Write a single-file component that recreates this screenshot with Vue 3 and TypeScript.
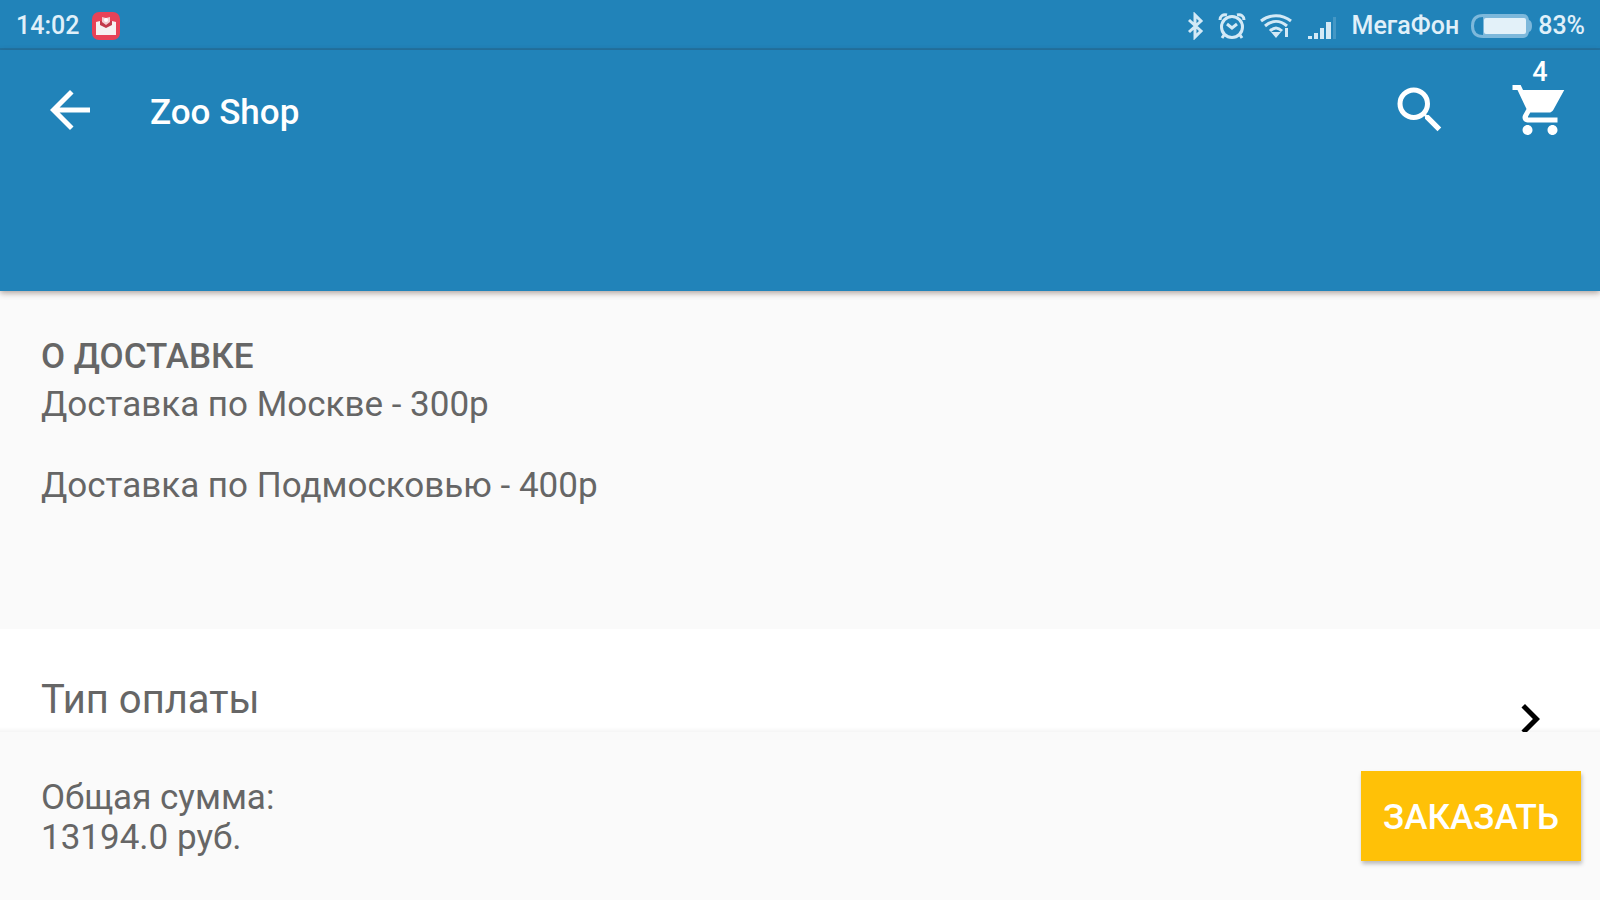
<script setup lang="ts">
import { ref } from 'vue'

const cartCount = ref(4)
const deliveryOptions: string[] = ['Доставка по Москве - 300р', 'Доставка по Подмосковью - 400р']
const total = ref(13194)
const battery = ref(83)
</script>

<template>
  <div class="screen">
    <div class="status">
      <span>14:02</span>
      <svg class="mail" viewBox="0 0 28 28" aria-hidden="true">
        <rect width="28" height="28" rx="7" fill="#e84257" />
        <path d="M4 10l4-1 6 5 6-5 4 1v13H4z" fill="#f6f1f1" />
        <path d="M8 9h12v4l-6 3-6-3z" fill="#c23a4b" />
        <path d="M10 5l4 1 4-1v5l-4 3-4-3z" fill="#f3cdd2" />
        <circle cx="14" cy="8" r="2" fill="#fff" />
      </svg>
      <div class="indicators">
        <svg class="bluetooth" viewBox="0 0 18 28" aria-hidden="true">
          <path d="M3 8l12 11-6 6V3l6 6L3 20" />
        </svg>
        <svg class="alarm" viewBox="0 0 28 28" aria-hidden="true">
          <circle cx="14" cy="15" r="10.5" />
          <path d="M9 12l5 4 5-4M2 8c0-4 3-6 7-5M26 8c0-4-3-6-7-5M6 23l-2 3M22 23l2 3" />
        </svg>
        <svg class="wifi" viewBox="0 0 34 28" aria-hidden="true">
          <path d="M2 9c9-7 21-7 30 0M6 14c7-6 15-6 22 0M11 19c4-4 8-4 12 0" />
          <path d="M12 20h10l-5 6zM26 16h3v9h-3z" class="solid" />
        </svg>
        <svg class="signal" viewBox="0 0 30 24" aria-hidden="true">
          <path d="M1 20h4v3H1zM7 17h4v6H7zM13 12h4v11h-4zM19 6h5v17h-5z" />
          <path d="M26 1h3v22h-3z" opacity=".2" />
        </svg>
        <span class="carrier">МегаФон</span>
        <svg class="battery" viewBox="0 0 62 26" aria-hidden="true">
          <path d="M13 1h40q5 0 6 6 3 1 3 6t-3 6q-1 6-6 6H13Q1 25 1 13T13 1z" fill="#7db8db" />
          <path d="M13 4Q4 4 4 13t9 9z" fill="#2183b9" />
          <rect x="14" y="5" width="42" height="16" rx="2" fill="#e3f1f9" />
        </svg>
        <span>{{ battery }}%</span>
      </div>
    </div>

    <header class="appbar">
      <button class="icon-button" type="button" aria-label="Назад">
        <svg viewBox="0 0 24 24"><path d="M20 11H7.830l5.590-5.590L12 4l-8 8 8 8 1.410-1.410L7.830 13H20v-2z" /></svg>
      </button>
      <h1>Zoo Shop</h1>
      <button class="icon-button search" type="button" aria-label="Поиск">
        <svg viewBox="0 0 24 24"><path d="M15.500 14h-.79l-.28-.27A6.471 6.471 0 0 0 16 9.500 6.500 6.500 0 1 0 9.500 16c1.610 0 3.090-.59 4.230-1.570l.27.28v.79l5 4.990L20.490 19l-4.990-5zm-6 0C7.010 14 5 11.990 5 9.500S7.010 5 9.500 5 14 7.010 14 9.500 11.990 14 9.500 14z" /></svg>
      </button>
      <button class="icon-button cart" type="button" aria-label="Корзина">
        <svg viewBox="0 0 24 24"><path d="M7 18c-1.100 0-1.990.9-1.990 2S5.900 22 7 22s2-.9 2-2-.9-2-2-2zM1 2v2h2l3.600 7.590-1.350 2.450c-.16.28-.25.61-.25.96 0 1.100.9 2 2 2h12v-2H7.420c-.14 0-.25-.11-.25-.25l.03-.12.9-1.630h7.450c.75 0 1.410-.41 1.750-1.030L21.700 4H5.210l-.94-2H1zm16 16c-1.100 0-1.990.9-1.990 2s.89 2 1.990 2 2-.9 2-2-.9-2-2-2z" /></svg>
        <span class="badge">{{ cartCount }}</span>
      </button>
    </header>

    <main>
      <section class="delivery">
        <h2>О ДОСТАВКЕ</h2>
        <p v-for="option in deliveryOptions" :key="option">{{ option }}</p>
      </section>
      <button class="payment" type="button">
        <span>Тип оплаты</span>
        <svg viewBox="0 0 24 24" aria-hidden="true"><path d="M10 6L8.590 7.410 13.170 12l-4.580 4.590L10 18l6-6z" /></svg>
      </button>
    </main>

    <footer class="summary">
      <p>Общая сумма:<br />{{ total.toFixed(1) }} руб.</p>
      <button class="order" type="button">ЗАКАЗАТЬ</button>
    </footer>
  </div>
</template>

<style>
body {
  margin: 0;
}
</style>

<style scoped>
.screen {
  display: flex;
  flex-direction: column;
  height: 100vh;
  background: #fafafa;
  color: #666;
  font-family: Roboto, "Noto Sans", sans-serif;
  font-size: 35px;
  line-height: 40px;
}

h1,
h2,
p {
  margin: 0;
}

button {
  border: 0;
  padding: 0;
  background: none;
  color: inherit;
  font: inherit;
  cursor: pointer;
}

svg {
  display: block;
  flex: none;
}

.status {
  display: flex;
  align-items: center;
  flex: none;
  box-sizing: border-box;
  height: 50px;
  padding: 4px 15px 0 16px;
  border-bottom: 2px solid #1f74a5;
  background: #2183b9;
  color: #e0f0f9;
  font-size: 25px;
  font-weight: 500;
  line-height: 32px;
}

.mail {
  width: 28px;
  height: 28px;
  margin-left: 13px;
}

.indicators {
  display: flex;
  align-items: center;
  margin-left: auto;
  fill: none;
  stroke: #d3e9f6;
  stroke-width: 3;
}

.bluetooth {
  width: 18px;
  height: 28px;
}

.alarm {
  width: 28px;
  height: 28px;
  margin-left: 14px;
}

.wifi {
  width: 34px;
  height: 28px;
  margin-left: 13px;
}

.solid,
.signal {
  fill: #d3e9f6;
  stroke: none;
}

.signal {
  width: 30px;
  height: 24px;
  margin: 4px 0 0 14px;
}

.carrier {
  margin-left: 15px;
}

.battery {
  width: 62px;
  height: 26px;
  margin: 0 6px 0 11px;
  stroke: none;
}

.appbar {
  display: flex;
  align-items: flex-start;
  flex: none;
  box-sizing: border-box;
  height: 241px;
  padding: 30px 30px 0 40px;
  background: #2183b9;
  box-shadow: 0 2px 6px rgba(80, 50, 40, 0.45);
  color: #fff;
}

.icon-button {
  position: relative;
  width: 60px;
  height: 60px;
}

.icon-button svg {
  width: 60px;
  height: 60px;
  fill: currentColor;
}

h1 {
  margin-left: 50px;
  font-size: 35px;
  font-weight: 500;
  line-height: 66px;
}

.search {
  margin-left: auto;
}

.cart {
  margin-left: 60px;
}

.badge {
  position: absolute;
  top: -24px;
  left: 0;
  width: 100%;
  font-size: 27px;
  font-weight: 500;
  line-height: 32px;
  text-align: center;
}

main {
  display: flex;
  flex: 1;
  flex-direction: column;
  min-height: 0;
  overflow: hidden;
}

.appbar,
.summary {
  z-index: 1;
}

.delivery {
  flex: 1;
  padding: 46px 41px 0;
}

h2 {
  margin-bottom: 8px;
  font-size: 35px;
  font-weight: 500;
}

.delivery p + p {
  margin-top: 41px;
}

.payment {
  display: flex;
  align-items: flex-start;
  justify-content: space-between;
  flex: none;
  height: 103px;
  padding: 51px 40px 0 41px;
  overflow: hidden;
  background: linear-gradient(#fff 98px, #f5f5f5);
  font-size: 40px;
}

.payment svg {
  width: 60px;
  height: 60px;
  margin-top: 9px;
  fill: #000;
}

.summary {
  display: flex;
  align-items: center;
  justify-content: space-between;
  flex: none;
  box-sizing: border-box;
  height: 168px;
  padding: 4px 19px 0 41px;
  background: #fafafa;
}

.order {
  height: 90px;
  margin-bottom: 4px;
  padding: 3px 22px 0;
  background: #ffc107;
  box-shadow: 1px 3px 4px rgba(0, 0, 0, 0.25);
  color: #fff;
  font-weight: 500;
}
</style>
